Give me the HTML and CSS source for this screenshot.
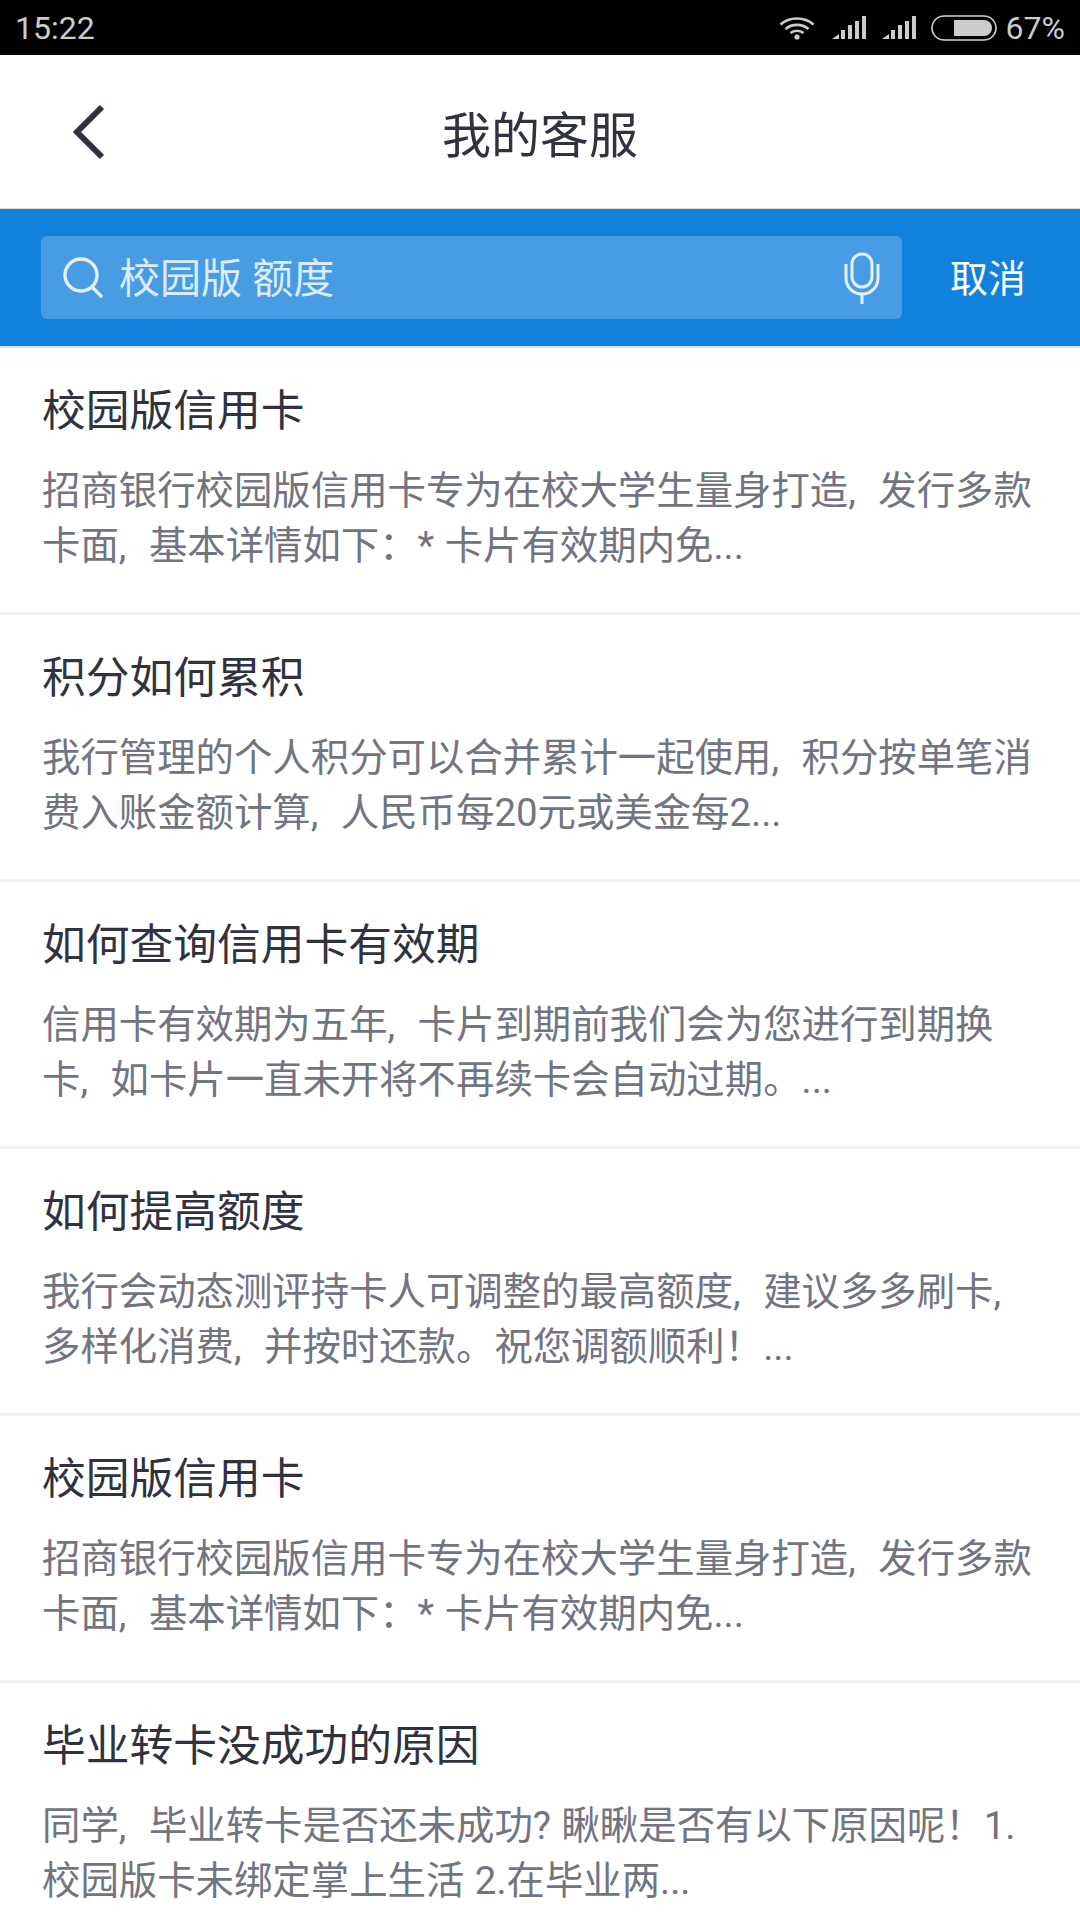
FILE: index.html
```html
<!DOCTYPE html>
<html lang="zh-CN">
<head>
  <meta charset="UTF-8">
  <meta name="viewport" content="width=device-width, initial-scale=1.0">
  <title>我的客服</title>
  <link rel="stylesheet" href="styles.css">
</head>
<body>
  <!-- Status bar -->
  <div class="statusBar">
    <span class="statusTime">15:22</span>
    <div class="statusIcons">
      <svg class="wifiIcon" width="36" height="24" viewBox="0 0 36 24" fill="none" stroke="#ccc" stroke-width="2.6">
        <path d="M1.5 8.5C10.5 .5 25.5 .5 34.5 8.5"/>
        <path d="M6.5 13C13 7.5 23 7.5 29.5 13"/>
        <path d="M11.5 17C15 14 21 14 24.5 17"/>
        <circle cx="18" cy="21" r="2.6" fill="#ccc" stroke="none"/>
      </svg>
      <svg class="signalIcon" width="34" height="24" viewBox="0 0 34 24" fill="#ccc">
        <path d="M0 23L7 18V23Z"/>
        <rect x="9" y="14" width="4" height="9"/>
        <rect x="16" y="9" width="4" height="14"/>
        <rect x="23" y="5" width="4" height="18"/>
        <rect x="30" y="0" width="4" height="23"/>
      </svg>
      <svg class="signalIcon" width="34" height="24" viewBox="0 0 34 24" fill="#ccc">
        <path d="M0 23L7 18V23Z"/>
        <rect x="9" y="14" width="4" height="9"/>
        <rect x="16" y="9" width="4" height="14"/>
        <rect x="23" y="5" width="4" height="18"/>
        <rect x="30" y="0" width="4" height="23"/>
      </svg>
      <svg class="batteryIcon" width="66" height="26" viewBox="0 0 66 26" fill="none">
        <rect x="1" y="1" width="64" height="24" rx="12" stroke="#ccc" stroke-width="1.6"/>
        <path d="M23 5H53A8 8 0 0 1 53 21H23Z" fill="#ccc"/>
      </svg>
      <span class="statusBattery">67%</span>
    </div>
  </div>

  <!-- Title bar -->
  <header class="titleBar">
    <svg class="backIcon" width="34" height="56" viewBox="0 0 34 56" fill="none" stroke="#31323f" stroke-width="6">
      <path d="M30 3L5 28L30 53"/>
    </svg>
    <h1 class="pageTitle">我的客服</h1>
  </header>

  <!-- Search bar -->
  <div class="searchBar">
    <div class="searchBox">
      <svg class="searchIcon" width="40" height="42" viewBox="0 0 40 42" fill="none" stroke="#e4f0fb" stroke-width="3.4">
        <circle cx="18" cy="18" r="16"/>
        <path d="M29 30L39 40"/>
      </svg>
      <span class="searchText">校园版 额度</span>
      <svg class="micIcon" width="36" height="52" viewBox="0 0 36 52" fill="none" stroke="#e4f0fb" stroke-width="3">
        <rect x="8" y="2" width="20" height="33" rx="10"/>
        <path d="M2 12V26C2 35 9 42 18 42C27 42 34 35 34 26V12"/>
        <path d="M18 42V52"/>
      </svg>
    </div>
    <span class="cancelBtn">取消</span>
  </div>

  <!-- Result list -->
  <div id="resultList">
    <div class="resultItem">
      <h2 class="resultTitle">校园版信用卡</h2>
      <p class="resultText">招商银行校园版信用卡专为在校大学生量身打造<span class="comma">,</span> 发行多款<br>卡面<span class="comma">,</span> 基本详情如下：* 卡片有效期内免...</p>
    </div>
    <div class="resultItem">
      <h2 class="resultTitle">积分如何累积</h2>
      <p class="resultText">我行管理的个人积分可以合并累计一起使用<span class="comma">,</span> 积分按单笔消<br>费入账金额计算<span class="comma">,</span> 人民币每20元或美金每2...</p>
    </div>
    <div class="resultItem">
      <h2 class="resultTitle">如何查询信用卡有效期</h2>
      <p class="resultText">信用卡有效期为五年<span class="comma">,</span> 卡片到期前我们会为您进行到期换<br>卡<span class="comma">,</span> 如卡片一直未开将不再续卡会自动过期。...</p>
    </div>
    <div class="resultItem">
      <h2 class="resultTitle">如何提高额度</h2>
      <p class="resultText">我行会动态测评持卡人可调整的最高额度<span class="comma">,</span> 建议多多刷卡,<br>多样化消费<span class="comma">,</span> 并按时还款。祝您调额顺利！...</p>
    </div>
    <div class="resultItem">
      <h2 class="resultTitle">校园版信用卡</h2>
      <p class="resultText">招商银行校园版信用卡专为在校大学生量身打造<span class="comma">,</span> 发行多款<br>卡面<span class="comma">,</span> 基本详情如下：* 卡片有效期内免...</p>
    </div>
    <div class="resultItem">
      <h2 class="resultTitle">毕业转卡没成功的原因</h2>
      <p class="resultText">同学<span class="comma">,</span> 毕业转卡是否还未成功? 瞅瞅是否有以下原因呢！1.<br>校园版卡未绑定掌上生活 2.在毕业两...</p>
    </div>
  </div>
</body>
</html>
```

FILE: styles.css
```css
html, body {
  height: 100%;
}
body {
  font-family: "Roboto", "Noto Sans CJK SC", sans-serif;
  margin: 0;
  width: 1080px;
  height: 1920px;
  overflow: hidden;
  background-color: #fff;
}
.statusBar {
  height: 55px;
  background-color: #000;
  color: #ccc;
  font-size: 32px;
  display: flex;
  align-items: center;
  justify-content: space-between;
  padding: 0 15px 0 15px;
}
.statusIcons {
  display: flex;
  align-items: center;
}
.wifiIcon {
  margin-right: 17px;
}
.signalIcon {
  margin-right: 16px;
}
.batteryIcon {
  margin-left: -1px;
  margin-right: 9px;
}
.titleBar {
  height: 153px;
  display: flex;
  align-items: center;
  justify-content: center;
  position: relative;
  border-bottom: 1px solid #ddd;
  box-sizing: content-box;
}
.backIcon {
  position: absolute;
  left: 72px;
  top: 49px;
}
.pageTitle {
  margin: 0;
  font-size: 49px;
  font-weight: 400;
  color: #31323f;
}
.searchBar {
  height: 137px;
  background-color: #1181dc;
  border-bottom: 2px solid #dfe3e8;
  display: flex;
  align-items: center;
  padding: 0 0 0 41px;
}
.searchBox {
  width: 861px;
  height: 83px;
  background-color: #479ce4;
  border-radius: 6px;
  display: flex;
  align-items: center;
  padding: 0 22px 0 22px;
  box-sizing: border-box;
}
.searchText {
  flex: 1;
  margin-left: 16px;
  padding-bottom: 6px;
  font-size: 41px;
  color: #dcecfa;
}
.cancelBtn {
  margin-left: 48px;
  padding-bottom: 4px;
  font-size: 38px;
  color: #fff;
}
.resultItem {
  height: 264px;
  padding: 0 42px;
  border-bottom: 3px solid #f0f0f0;
  overflow: hidden;
}
.resultTitle {
  margin: 35px 0 0;
  font-size: 43.75px;
  line-height: 56px;
  font-weight: 400;
  color: #31323f;
}
.resultText {
  margin: 24px 0 0;
  font-size: 38.4px;
  line-height: 55px;
  word-spacing: 1px;
  color: #72747f;
  white-space: nowrap;
}
.comma {
  margin-right: 12px;
}
```
